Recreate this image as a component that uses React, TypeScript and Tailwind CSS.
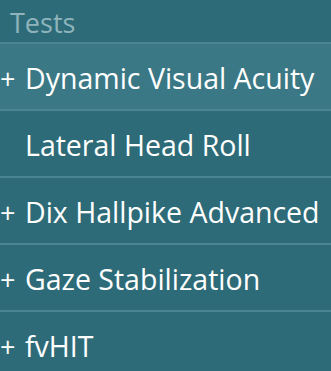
import React from "react";

const rows = [
  { label: "Dynamic Visual Acuity", plus: true, active: true },
  { label: "Lateral Head Roll", plus: false, active: false },
  { label: "Dix Hallpike Advanced", plus: true, active: false },
  { label: "Gaze Stabilization", plus: true, active: false },
  { label: "fvHIT", plus: true, active: false },
];

export default function App() {
  return (
    <div
      className="w-[331px] h-[371px] overflow-hidden bg-[#2e6b78] flex flex-col"
      style={{ fontFamily: '"Open Sans", "Noto Sans", sans-serif' }}
    >
      <div className="h-[42px] shrink-0 pl-[10px] flex items-center text-[27px] leading-none text-[#8fb4bc] pt-[3px]">
        Tests
      </div>
      {rows.map((r, i) => (
        <div key={i} className="flex flex-col shrink-0">
          <div className="h-[2px] bg-[#4a8592]" />
          <div
            className={
              "h-[65px] flex items-center text-[28.5px] leading-none text-white pt-[3px] " +
              (r.active ? "bg-[#3b7885]" : "")
            }
          >
            <span className="w-[25px] shrink-0 text-[27px]">{r.plus ? "+" : ""}</span>
            <span>{r.label}</span>
          </div>
        </div>
      ))}
    </div>
  );
}
